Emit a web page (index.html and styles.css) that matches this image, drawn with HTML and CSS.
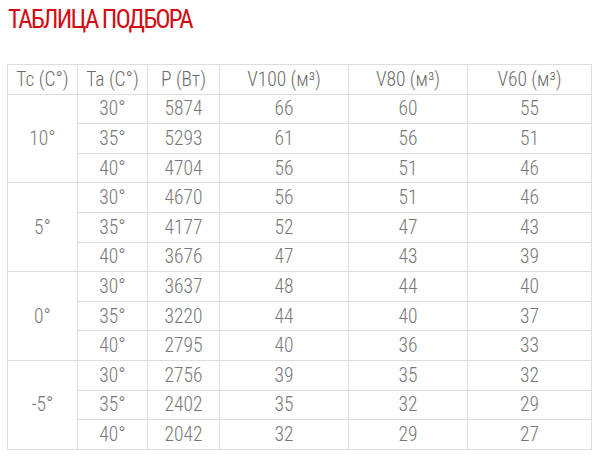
FILE: index.html
```html
<!DOCTYPE html>
<html lang="ru">
<head>
<meta charset="utf-8">
<link rel="stylesheet" href="styles.css">
</head>
<body>
<h1 class="title">ТАБЛИЦА ПОДБОРА</h1>
<table class="sel">
<colgroup>
<col class="c1"><col class="c2"><col class="c3"><col class="c4"><col class="c5"><col class="c6">
</colgroup>
<thead>
<tr><th>Tc (C°)</th><th>Ta (C°)</th><th>P (Вт)</th><th>V100 (м³)</th><th>V80 (м³)</th><th>V60 (м³)</th></tr>
</thead>
<tbody>
<tr><td rowspan="3">10°</td><td>30°</td><td>5874</td><td>66</td><td>60</td><td>55</td></tr>
<tr><td>35°</td><td>5293</td><td>61</td><td>56</td><td>51</td></tr>
<tr><td>40°</td><td>4704</td><td>56</td><td>51</td><td>46</td></tr>
<tr><td rowspan="3">5°</td><td>30°</td><td>4670</td><td>56</td><td>51</td><td>46</td></tr>
<tr><td>35°</td><td>4177</td><td>52</td><td>47</td><td>43</td></tr>
<tr><td>40°</td><td>3676</td><td>47</td><td>43</td><td>39</td></tr>
<tr><td rowspan="3">0°</td><td>30°</td><td>3637</td><td>48</td><td>44</td><td>40</td></tr>
<tr><td>35°</td><td>3220</td><td>44</td><td>40</td><td>37</td></tr>
<tr><td>40°</td><td>2795</td><td>40</td><td>36</td><td>33</td></tr>
<tr><td rowspan="3">-5°</td><td>30°</td><td>2756</td><td>39</td><td>35</td><td>32</td></tr>
<tr><td>35°</td><td>2402</td><td>35</td><td>32</td><td>29</td></tr>
<tr><td>40°</td><td>2042</td><td>32</td><td>29</td><td>27</td></tr>
</tbody>
</table>
</body>
</html>
```

FILE: styles.css
```css
html, body {
  margin: 0;
  padding: 0;
  background: #fff;
}
body {
  padding: 5px 7px;
  font-family: "Roboto Condensed", "Liberation Sans Narrow", "Roboto", "Liberation Sans", sans-serif;
}
.title {
  margin: 0;
  padding-left: 1px;
  font-family: "Roboto Condensed", "Liberation Sans Narrow", "Roboto", sans-serif;
  font-weight: 400;
  font-size: 25px;
  line-height: 29px;
  color: #d40a12;
  letter-spacing: -1.7px;
}
.sel {
  margin-top: 30px;
  border-collapse: collapse;
  width: 584px;
  table-layout: fixed;
  color: #777;
  font-size: 19.5px;
  font-weight: 300;
}
.c1 { width: 70px; }
.c2 { width: 70px; }
.c3 { width: 72px; }
.c4 { width: 129px; }
.c5 { width: 119px; }
.c6 { width: 124px; }
.sel th, .sel td {
  border: 1px solid #ddd;
  height: 28.6px;
  padding: 0;
  text-align: center;
  font-weight: 300;
  vertical-align: middle;
}
.sel th {
  color: #6c6c6c;
}
```
